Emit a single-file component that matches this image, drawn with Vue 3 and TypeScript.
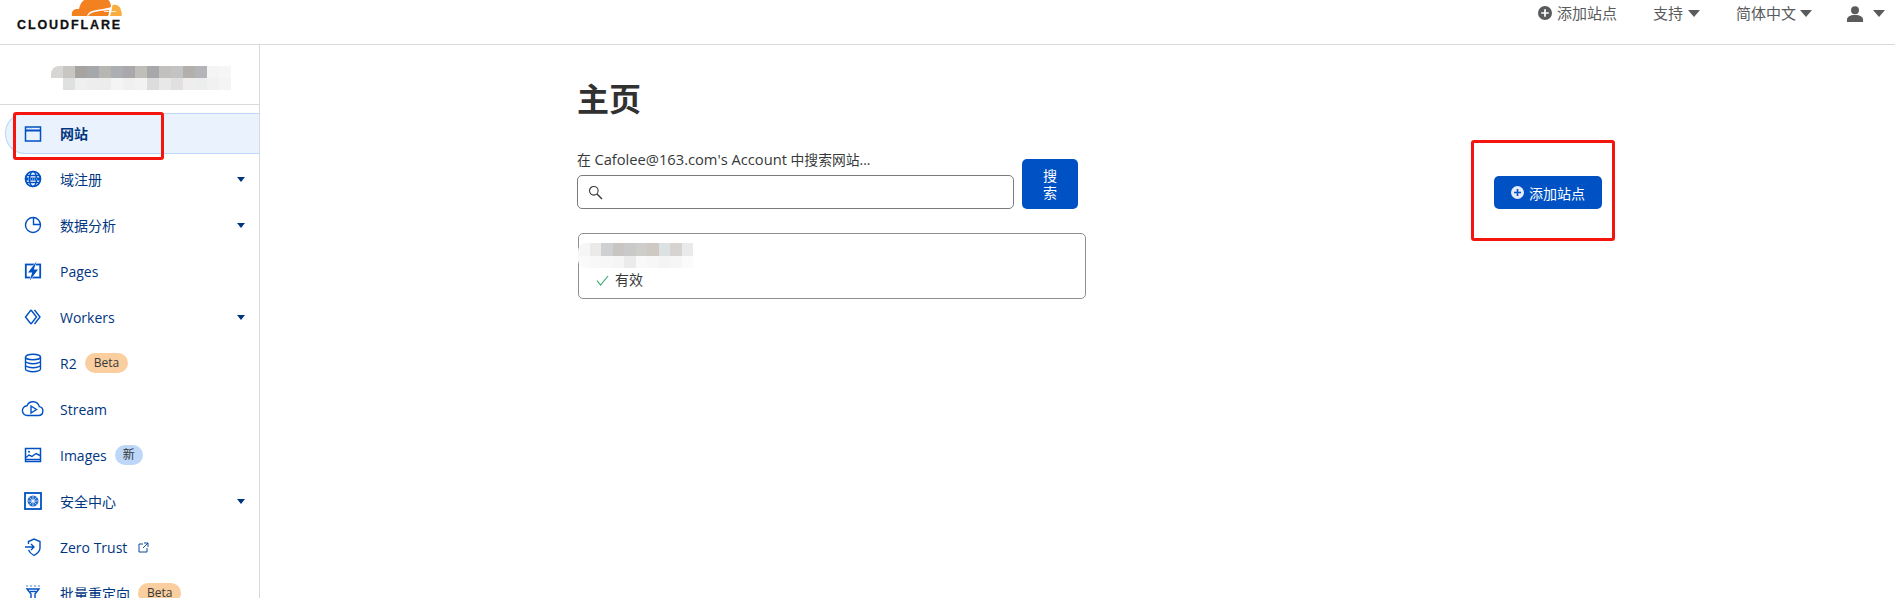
<script setup lang="ts">
interface NavItem { label: string; icon: string; caret?: boolean; badge?: string; badgeKind?: string; external?: boolean; active?: boolean }
const items: NavItem[] = [
  { label: '网站', icon: 'web', active: true },
  { label: '域注册', icon: 'globe', caret: true },
  { label: '数据分析', icon: 'pie', caret: true },
  { label: 'Pages', icon: 'pages' },
  { label: 'Workers', icon: 'workers', caret: true },
  { label: 'R2', icon: 'db', badge: 'Beta', badgeKind: 'orange' },
  { label: 'Stream', icon: 'stream' },
  { label: 'Images', icon: 'images', badge: '新', badgeKind: 'blue' },
  { label: '安全中心', icon: 'safe', caret: true },
  { label: 'Zero Trust', icon: 'shield', external: true },
  { label: '批量重定向', icon: 'filter', badge: 'Beta', badgeKind: 'orange' },
]
const mosaicA = [
  ['#d8d6d4','#c8c6c3','#a6a3a1','#a4a8aa','#b8b6b3','#abafb1','#a9a9ab','#c0beb8','#a6a8aa','#c2c0bf','#c4c3c3','#b3afad','#b4b4b8','#f4f4f4','#f6f6f6'],
  ['#ffffff','#dfe1e1','#efefef','#ededed','#ececec','#f4f4f4','#f0f0f0','#f2f2f2','#dcdcdc','#e8e8e8','#e2e0de','#eeeeee','#eceded','#f1f1f1','#f4f4f4'],
]
const mosaicB = [
  ['#f6f6f6','#ebeae9','#cfd0d2','#c8c5c2','#c8c9c8','#cfcdca','#cec9c2','#dce1e4','#d6d3d0','#e8eaec'],
  ['#fafafa','#f8f8f8','#f7f7f7','#f5f5f5','#ebebeb','#f9f9f9','#f7f7f7','#f4f4f4','#f6f6f6','#fbfbfb'],
]
</script>

<template>
  <div class="page">
    <header class="topbar">
      <div class="logo">
        <svg class="cloud" width="52" height="16" viewBox="0 0 52 16">
          <path d="M2 16 C1 11 4 8.500 9 9 C10 3 14 -2 22 -3 L34 -3 C39 -1 41 3 41 7 C35 9 28 9.500 24 10.500 C20 11.500 18 13 17 16 Z" fill="#f48120" />
          <path d="M18 16 C20 12 28 11 39 10 C39 12 39 14 38 16 Z" fill="#f48120" />
          <path d="M40 16 C41.500 12 42 8 42.500 5 C47 4 51 7 51 11 C52 13 52 14 51.500 16 Z" fill="#faad3f" />
          <path d="M34 11.500 L46 11.500 M40 9 L40 14" stroke="#fff" stroke-width=".8" />
        </svg>
        <span class="wordmark">CLOUDFLARE</span>
      </div>
      <nav class="topnav">
        <a class="topitem add">
          <svg width="14" height="14" viewBox="0 0 13 13"><circle cx="6.500" cy="6.500" r="6.500" fill="#595b5c" /><path d="M6.500 3v7M3 6.500h7" stroke="#fff" stroke-width="1.600" /></svg>
          添加站点
        </a>
        <a class="topitem support">支持<i class="tri"></i></a>
        <a class="topitem lang">简体中文<i class="tri"></i></a>
        <a class="topitem user">
          <svg class="person" width="16" height="16" viewBox="0 0 16 16" fill="#595b5c"><circle cx="8" cy="4.200" r="4" /><path d="M0 16v-2.500C0 10.800 3 9 8 9s8 1.800 8 4.500V16Z" /></svg>
          <i class="tri"></i>
        </a>
      </nav>
    </header>
    <div class="body">
      <aside class="sidebar">
        <div class="account">
          <div class="mosaic">
            <div v-for="(row, r) in mosaicA" :key="r" class="mrow">
              <span v-for="(c, i) in row" :key="i" class="cell" :style="{ background: c }"></span>
            </div>
          </div>
        </div>
        <ul class="nav">
          <li v-for="item in items" :key="item.label" class="row" :class="{ active: item.active }">
            <svg class="icon" width="24" height="24" viewBox="0 0 24 24" fill="none" stroke="#0051c3" stroke-width="1.400">
              <template v-if="item.icon === 'web'">
                <rect x="4.500" y="5" width="15" height="14" stroke-width="1.500" /><path d="M4.500 8.500h15" stroke-width="2" /><path d="M6 6.500h6" stroke="#bcd7f7" stroke-width="1" stroke-dasharray="1 1" />
              </template>
              <template v-else-if="item.icon === 'globe'">
                <circle cx="12" cy="12" r="7.500" stroke-width="1.700" /><ellipse cx="12" cy="12" rx="3.500" ry="7.500" /><path d="M5 8.500h14M5 15.500h14" /><path d="M4.500 12h15" stroke-width="3" /><path d="M7 12h10" stroke="#bcd7f7" stroke-width="1" stroke-dasharray="1 1" />
              </template>
              <template v-else-if="item.icon === 'pie'">
                <circle cx="12" cy="12" r="7.500" /><path d="M12.500 4.500V11.500H19.500" />
              </template>
              <template v-else-if="item.icon === 'pages'">
                <rect x="4.800" y="5.500" width="14.400" height="13" stroke-width="1.800" /><path d="M15.500 2.500 7 13.500h4.200L8.800 21.500 17 10.500h-4.200Z" fill="#0051c3" stroke="#fff" stroke-width="1" paint-order="stroke" />
              </template>
              <template v-else-if="item.icon === 'workers'">
                <path d="M10 5 4.500 12 10 19M10 5l5.500 7L10 19" /><path d="M13.500 5l5.500 7-5.500 7" />
              </template>
              <template v-else-if="item.icon === 'db'">
                <ellipse cx="12" cy="6" rx="7.500" ry="2.800" /><path d="M4.500 6v12c0 1.500 3.400 2.800 7.500 2.800s7.500-1.300 7.500-2.800V6M4.500 10c0 1.500 3.400 2.800 7.500 2.800s7.500-1.300 7.500-2.800M4.500 14c0 1.500 3.400 2.800 7.500 2.800s7.500-1.300 7.500-2.800" />
              </template>
              <template v-else-if="item.icon === 'stream'">
                <path d="M6.500 18.500h11a4.500 4.500 0 0 0 .8-8.900 6.500 6.500 0 0 0-12.300-.8 4.800 4.800 0 0 0 .5 9.700Z" /><path d="M10 9l5.500 3.500-5.500 3.500Z" />
              </template>
              <template v-else-if="item.icon === 'images'">
                <rect x="4.500" y="5.500" width="15" height="13" stroke-width="1.500" /><path d="M4.500 16.500h15" stroke-width="1.500" /><path d="M5 14.500l3-2.500 3 1.500 4-3 4 2" /><circle cx="8" cy="8.800" r="1" fill="#0051c3" stroke="none" />
              </template>
              <template v-else-if="item.icon === 'safe'">
                <rect x="4" y="4" width="16" height="16" stroke-width="1.800" /><circle cx="12" cy="12" r="5.500" fill="#0051c3" stroke="none" opacity=".85" /><circle cx="12" cy="12" r="1.600" fill="#e9f2fd" stroke="none" /><path d="M12 7v10M7 12h10M8.500 8.500l7 7M15.500 8.500l-7 7" stroke="#e9f2fd" stroke-width=".7" />
              </template>
              <template v-else-if="item.icon === 'shield'">
                <path d="M7.500 9V6.500L13 4l6 2.500V13c0 3-2.500 5.500-6 7.500-2.500-1.400-4.500-3.200-5.500-5.500" /><path d="M4 12h9M10 9l3 3-3 3" />
              </template>
              <template v-else>
                <path d="M6 8h12l-4 5v5h-4v-5Z" fill="#fff" /><path d="M6 4.500v1.500M10 4.500v1.500M14 4.500v1.500M18 4.500v1.500" stroke-dasharray="1 1" /><path d="M8.500 10.500h7" />
              </template>
            </svg>
            <span class="label">{{ item.label }}</span>
            <span v-if="item.badge" class="badge" :class="item.badgeKind">{{ item.badge }}</span>
            <svg v-if="item.external" class="ext" width="11" height="11" viewBox="0 0 11 11" fill="none" stroke="#0a4a9e" stroke-width="1">
              <path d="M5 2H1v8h8V6M6 1h4v4M10 1 5 6" />
            </svg>
            <i v-if="item.caret" class="caret"></i>
          </li>
        </ul>
      </aside>
      <main class="main">
        <section class="content">
          <h1 class="title">主页</h1>
          <div class="search">
            <div class="field">
              <label class="flabel">在 <span class="latin">Cafolee@163.com's Account</span> 中搜索网站...</label>
              <div class="input">
                <svg width="15" height="15" viewBox="0 0 15 15" fill="none" stroke="#36393a" stroke-width="1.100"><circle cx="5.800" cy="5.800" r="4.300" /><path d="M9 9l5 5" stroke-width="1.400" /></svg>
              </div>
            </div>
            <button class="searchbtn">搜索</button>
          </div>
          <div class="card">
            <div class="mosaic small">
              <div v-for="(row, r) in mosaicB" :key="r" class="mrow">
                <span v-for="(c, i) in row" :key="i" class="cell" :style="{ background: c }"></span>
              </div>
            </div>
            <div class="status">
              <svg width="13" height="11" viewBox="0 0 13 11" fill="none" stroke="#3aa76d" stroke-width="1.100"><path d="M1 5.500 4.500 10 12 1" /></svg>
              <span>有效</span>
            </div>
          </div>
        </section>
        <button class="addbtn">
          <svg width="13" height="13" viewBox="0 0 13 13"><circle cx="6.500" cy="6.500" r="6.500" fill="#e3ecf8" /><path d="M6.500 3v7M3 6.500h7" stroke="#0051c3" stroke-width="1.600" /></svg>
          添加站点
        </button>
      </main>
    </div>
    <div class="mark mark-nav"></div>
    <div class="mark mark-add"></div>
  </div>
</template>

<style scoped>
.page {
  position: relative;
  width: 1895px;
  height: 598px;
  overflow: hidden;
  background: #fff;
  font-family: "Open Sans", "Noto Sans CJK SC", sans-serif;
  font-size: 14px;
  color: #36393a;
  display: flex;
  flex-direction: column;
}
.topbar {
  flex: none;
  height: 44px;
  border-bottom: 1px solid #d9d9d9;
  display: flex;
  justify-content: space-between;
  padding-left: 17px;
}
.logo {
  width: 105px;
  height: 44px;
  display: flex;
  flex-direction: column;
  align-items: flex-end;
}
.cloud { flex: none; }
.wordmark {
  align-self: flex-start;
  margin-top: 2px;
  font-family: "Liberation Sans", sans-serif;
  font-weight: 700;
  font-size: 12.500px;
  line-height: 14px;
  letter-spacing: 1.900px;
  color: #111;
  -webkit-text-stroke: .3px #111;
  white-space: nowrap;
}
.topnav {
  display: flex;
  align-items: flex-start;
  padding-top: 3px;
  margin-right: 10px;
  color: #595b5c;
  font-size: 15px;
  line-height: 20px;
}
.topitem { display: flex; align-items: center; gap: 5px; white-space: nowrap; }
.support { margin-left: 36px; }
.lang { margin-left: 36px; gap: 4px; }
.user { margin-left: 35px; gap: 10px; height: 20px; align-items: flex-start; }
.user .person { margin-top: 3px; }
.user .tri { margin-top: 7px; }
.tri {
  display: block;
  width: 0;
  height: 0;
  border-left: 6.500px solid transparent;
  border-right: 6.500px solid transparent;
  border-top: 7px solid #595b5c;
}
.body { flex: 1; display: flex; min-height: 0; }
.sidebar {
  flex: none;
  width: 260px;
  box-sizing: border-box;
  border-right: 1px solid #d9d9d9;
  overflow: hidden;
}
.account {
  height: 60px;
  box-sizing: border-box;
  border-bottom: 1px solid #d9d9d9;
  padding: 21px 0 0 51px;
}
.mosaic { display: flex; flex-direction: column; width: max-content; }
.mrow { display: flex; height: 12px; }
.cell { display: block; width: 12px; }
.mosaic .mrow:first-child .cell:first-child { border-top-left-radius: 8px; }
.mosaic .mrow:last-child .cell:first-child { border-bottom-left-radius: 8px; }
.nav {
  list-style: none;
  margin: 8px 0 0;
  padding: 0;
}
.row {
  height: 46px;
  box-sizing: border-box;
  display: flex;
  align-items: center;
  padding-left: 21px;
  color: #003681;
  font-size: 14px;
  position: relative;
}
.row:first-child { height: 41px; margin: 0 0 2px 5px; padding-left: 15px; }
.active {
  background: #e9f2fd;
  border: 1px solid #bcd7f7;
  border-right: 0;
  border-radius: 20px 0 0 20px;
  font-weight: 600;
}
.active .label { margin-top: -2px; }
.icon { flex: none; }
.label { margin-left: 15px; white-space: nowrap; }
.badge {
  margin-left: 8px;
  height: 20px;
  line-height: 20px;
  border-radius: 10px;
  padding: 0 9px;
  font-size: 12px;
  color: #36393a;
}
.orange { background: #fbcea0; }
.blue { background: #bcd7f7; padding: 0 8px; }
.ext { margin-left: 11px; }
.caret {
  position: absolute;
  right: 14px;
  top: 21px;
  width: 0;
  height: 0;
  border-left: 4.500px solid transparent;
  border-right: 4.500px solid transparent;
  border-top: 5px solid #003681;
}
.main {
  flex: 1;
  display: flex;
  align-items: flex-start;
  padding-left: 318px;
}
.content { width: 508px; flex: none; }
.title {
  margin: 34px 0 0 -1px;
  font-size: 32px;
  line-height: 40px;
  font-weight: 700;
  color: #313131;
}
.search {
  display: flex;
  align-items: flex-end;
  gap: 8px;
  margin: 31px 0 0 -1px;
}
.field { width: 437px; }
.flabel { display: block; font-size: 13.800px; line-height: 18px; margin-bottom: 6px; color: #36393a; }
.latin { font-size: 14.700px; }
.input {
  height: 34px;
  box-sizing: border-box;
  border: 1px solid #7b7b7b;
  border-radius: 5px;
  display: flex;
  align-items: center;
  padding-left: 10px;
}
.searchbtn {
  width: 56px;
  height: 50px;
  border: 0;
  border-radius: 5px;
  background: #0051c3;
  color: #fff;
  font: inherit;
  font-size: 14px;
  line-height: 17px;
  padding: 0 18px;
}
.card {
  margin-top: 24px;
  height: 66px;
  box-sizing: border-box;
  border: 1px solid #8f8f8f;
  border-radius: 5px;
  position: relative;
}
.small { margin: 9px 0 0 -1px; }
.small .cell { width: 11.500px; }
.small .mrow { height: 12.500px; }
.status {
  display: flex;
  align-items: center;
  gap: 6px;
  margin: 3px 0 0 17px;
  font-size: 14px;
  line-height: 18px;
}
.addbtn {
  flex: none;
  margin: 131px 0 0 408px;
  width: 108px;
  height: 33px;
  border: 0;
  border-radius: 5px;
  background: #0051c3;
  color: #fff;
  font: inherit;
  font-size: 14px;
  display: flex;
  align-items: center;
  justify-content: center;
  gap: 5px;
  padding-bottom: 1px;
}
.mark {
  position: absolute;
  border: 3px solid #f5150f;
  border-radius: 3px;
  box-sizing: border-box;
}
.mark-nav { left: 13px; top: 112px; width: 151px; height: 48px; }
.mark-add { left: 1471px; top: 140px; width: 144px; height: 101px; }
</style>

<style>
html, body { margin: 0; overflow: hidden; }
</style>
